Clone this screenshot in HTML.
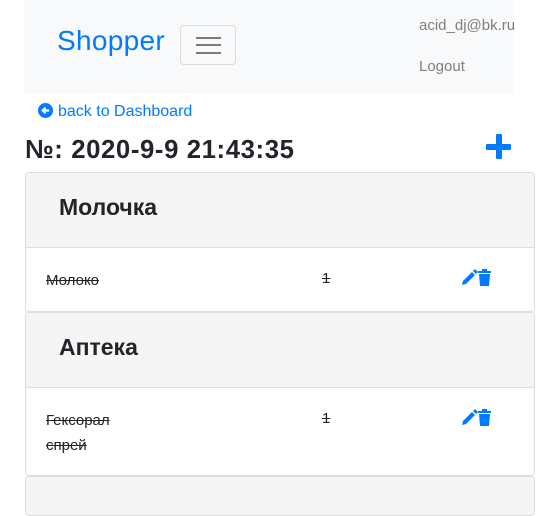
<!DOCTYPE html>
<html><head><meta charset="utf-8"><style>
body{margin:0;width:545px;height:480px;overflow:hidden;background:#fff;font-family:"Segoe UI","Liberation Sans",sans-serif;color:#212529;position:relative}
.nav{position:absolute;left:24px;top:0;width:489px;height:93px;background:#f8f9fa}
.brand{position:absolute;left:33px;top:25px;font-size:28px;color:#007bff;letter-spacing:0.3px}
.tog{position:absolute;left:156px;top:25px;width:56px;height:40px;border:1px solid #dcdcdc;border-radius:4px;box-sizing:border-box}
.tog i{position:absolute;left:15px;width:25px;height:2px;background:#7a7a7a}
.em{position:absolute;left:395px;top:17px;font-size:15px;color:#7f7f7f}
.lo{position:absolute;left:395px;top:58px;font-size:15px;color:#7f7f7f}
.back{position:absolute;left:38px;top:103px;font-size:16px;color:#007bff}
.back b{display:inline-block;width:15px;height:15px;border-radius:50%;background:#007bff;vertical-align:-2px;margin-right:5px;position:relative}
h1{position:absolute;left:25px;top:134px;margin:0;font-size:26px;font-weight:bold;letter-spacing:0.6px;transform:scaleX(0.99);transform-origin:left}
.plus{position:absolute;left:486px;top:134px;width:25px;height:25px}
.plus:before{content:"";position:absolute;left:10px;top:0;width:6px;height:25px;background:#007bff;border-radius:1px}
.plus:after{content:"";position:absolute;left:0;top:10px;width:25px;height:6px;background:#007bff;border-radius:1px}
.card{position:absolute;left:25px;width:510px;border:1px solid #ddd;border-radius:4px;box-sizing:border-box;overflow:hidden}
.hd{background:#f5f5f5;border-bottom:1px solid #ddd;height:75px;box-sizing:border-box;font-size:23px;font-weight:bold;padding:21px 0 0 33px}
.it{position:absolute;left:20px;font-size:15px;text-decoration:line-through;line-height:25px}
.q{position:absolute;left:296px;font-size:15px;text-decoration:line-through}
.ic{position:absolute;left:434px}
</style></head><body>
<div class="nav">
<div class="brand">Shopper</div>
<div class="tog"><i style="top:11px"></i><i style="top:18px"></i><i style="top:26px"></i></div>
<div class="em">acid_dj@bk.ru</div>
<div class="lo">Logout</div>
</div>
<div class="back"><b><svg width="15" height="15" viewBox="0 0 14 14" style="position:absolute;left:0;top:0"><path d="M10.5 7H4.5M7 4.3L4.3 7 7 9.7" stroke="#fff" stroke-width="2" fill="none"/></svg></b>back to Dashboard</div>
<h1>№: 2020-9-9 21:43:35</h1>
<div class="plus"></div>
<div class="card" style="top:172px;height:140px"><div class="hd">Молочка</div>
<div class="it" style="top:95px">Молоко</div><div class="q" style="top:97px">1</div>
<svg class="ic" style="top:96px" width="32" height="18" viewBox="0 0 32 18"><path d="M2 16l1-4 9-9 3 3-9 9z M13 2l2-2 3 3-2 2z" fill="#007bff"/><rect x="18" y="2" width="13" height="2" fill="#007bff"/><rect x="22" y="0" width="5" height="2" fill="#007bff"/><path d="M19 5h11l-1 12h-9z" fill="#007bff"/></svg>
</div>
<div class="card" style="top:312px;height:164px"><div class="hd">Аптека</div>
<div class="it" style="top:95px">Гексорал<br>спрей</div><div class="q" style="top:97px">1</div>
<svg class="ic" style="top:96px" width="32" height="18" viewBox="0 0 32 18"><path d="M2 16l1-4 9-9 3 3-9 9z M13 2l2-2 3 3-2 2z" fill="#007bff"/><rect x="18" y="2" width="13" height="2" fill="#007bff"/><rect x="22" y="0" width="5" height="2" fill="#007bff"/><path d="M19 5h11l-1 12h-9z" fill="#007bff"/></svg>
</div>
<div class="card" style="top:476px;height:40px;background:#f5f5f5"></div>
</body></html>
